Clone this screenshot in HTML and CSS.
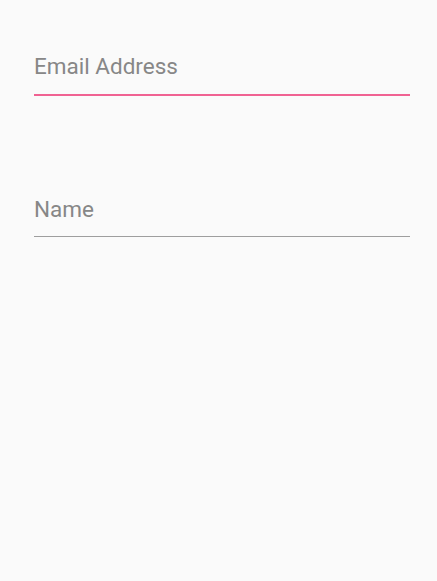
FILE: index.html
```html
<!DOCTYPE html>
<html>
<head>
<meta charset="utf-8">
<link rel="stylesheet" href="styles.css">
</head>
<body>
<div class="form">
  <div class="field field-focused">
    <span class="label">Email Address</span>
  </div>
  <div class="field">
    <span class="label">Name</span>
  </div>
</div>
</body>
</html>
```

FILE: styles.css
```css
html, body {
  margin: 0;
  padding: 0;
  background: #fafafa;
  height: 100%;
}
body {
  font-family: Roboto, "Noto Sans", sans-serif;
}
.form {
  display: flex;
  flex-direction: column;
  gap: 100px;
  padding: 53px 27px 0 34px;
}
.field {
  padding-bottom: 14px;
  border-bottom: 1px solid #9e9e9e;
}
.field-focused {
  padding-bottom: 15px;
  border-bottom: 2px solid #f06292;
}
.label {
  display: block;
  font-size: 22.5px;
  line-height: 26px;
  color: #878787;
}
```
